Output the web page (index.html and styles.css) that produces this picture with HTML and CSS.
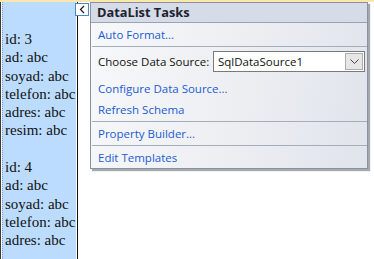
FILE: index.html
```html
<!DOCTYPE html>
<html lang="tr">
<head>
  <meta charset="UTF-8">
  <title>DataList Tasks</title>
  <link rel="stylesheet" href="styles.css">
</head>
<body>
  <div class="topband"></div>
  <div class="designer">
    <div class="datalist">
      <div class="record">
        id: 3<br>ad: abc<br>soyad: abc<br>telefon: abc<br>adres: abc<br>resim: abc<br><br>
      </div>
      <div class="record">
        id: 4<br>ad: abc<br>soyad: abc<br>telefon: abc<br>adres: abc
      </div>
    </div>
    <div class="rightline"></div>
  </div>

  <button class="smart-tag" title="Hide tasks">
    <svg width="7" height="9" viewBox="0 0 7 9"><path d="M5 1 L1.5 4.5 L5 8" fill="none" stroke="#1a1a1a" stroke-width="1.2"/></svg>
  </button>

  <div class="tasks">
    <div class="tasks-title">DataList Tasks</div>
    <div class="tasks-group">
      <a class="task" href="#">Auto Format...</a>
    </div>
    <div class="tasks-group group-source">
      <div class="task-field">
        <span>Choose Data Source:</span>
        <div class="combo">
          <span class="combo-value">SqlDataSource1</span>
          <span class="combo-btn">
            <svg width="9" height="5" viewBox="0 0 9 5"><path d="M0.5 0.5 L4.5 4.5 L8.5 0.5" fill="none" stroke="#444" stroke-width="1"/></svg>
          </span>
        </div>
      </div>
      <a class="task" href="#">Configure Data Source...</a>
      <a class="task" href="#">Refresh Schema</a>
    </div>
    <div class="tasks-group">
      <a class="task" href="#">Property Builder...</a>
    </div>
    <div class="tasks-group last">
      <a class="task" href="#">Edit Templates</a>
    </div>
  </div>
</body>
</html>
```

FILE: styles.css
```css
:root {
  --link: #1c5ad4;
  --sep: #a3adbb;
  --panel-border: #8b929e;
  --ui-font: "Open Sans", "Noto Sans", sans-serif;
}
* { box-sizing: border-box; margin: 0; padding: 0; }
body {
  position: relative;
  width: 374px;
  height: 259px;
  overflow: hidden;
  background: #ffffff;
}
.topband {
  height: 2px;
  background: #fbe7ad;
}
.designer {
  display: flex;
  height: 257px;
  border-left: 1px solid #3a3a3a;
}
.datalist {
  width: 74px;
  margin-left: 1px;
  background: #bcdcff;
  border-left: 1px dotted #7f9cc4;
  padding: 28px 0 0 2px;
  font-family: "Liberation Serif", serif;
  font-size: 15px;
  line-height: 18.3px;
  color: #111;
  white-space: nowrap;
  overflow: hidden;
}
.rightline {
  width: 1px;
  margin-left: 1px;
  background: #111;
}

.smart-tag {
  position: absolute;
  left: 75px;
  top: 3px;
  width: 14px;
  height: 13px;
  background: #fff;
  border: 1px solid #4f87c0;
  display: flex;
  align-items: center;
  justify-content: center;
}

.tasks {
  position: absolute;
  left: 90px;
  top: 2px;
  width: 278px;
  height: 167px;
  border: 1px solid var(--panel-border);
  background: linear-gradient(100deg, #f7f8fa 0%, #eceef2 55%, #e0e4eb 100%);
  box-shadow: 2px 2px 1px rgba(90,96,110,0.55);
  font-family: var(--ui-font);
  font-size: 11.5px;
}
.tasks-title {
  height: 20px;
  padding-left: 6px;
  line-height: 18px;
  font-size: 12.8px;
  font-weight: 700;
  color: #1e2330;
  background: #d5dce7;
  border-bottom: 1px solid #9aa3b1;
}
.tasks-group {
  padding: 1px 0;
  border-bottom: 1px solid var(--sep);
  margin-left: 1px;
}
.tasks-group.last { border-bottom: none; }
.group-source { padding-top: 3px; }
.task {
  display: block;
  height: 21px;
  line-height: 21px;
  padding-left: 6px;
  color: var(--link);
  text-decoration: none;
}
.task-field {
  display: flex;
  align-items: center;
  justify-content: space-between;
  height: 22px;
  padding-left: 6px;
  margin-bottom: 6px;
  color: #111;
}
.combo {
  width: 152px;
  height: 21px;
  margin-right: 2px;
  display: flex;
  align-items: center;
  background: #fff;
  border: 1px solid #7a7a7a;
}
.combo-value {
  flex: 1;
  padding-left: 4px;
}
.combo-btn {
  width: 18px;
  height: 17px;
  margin-right: 1px;
  display: flex;
  align-items: center;
  justify-content: center;
  background: #e6e6e6;
  border: 1px solid #adadad;
}
```
